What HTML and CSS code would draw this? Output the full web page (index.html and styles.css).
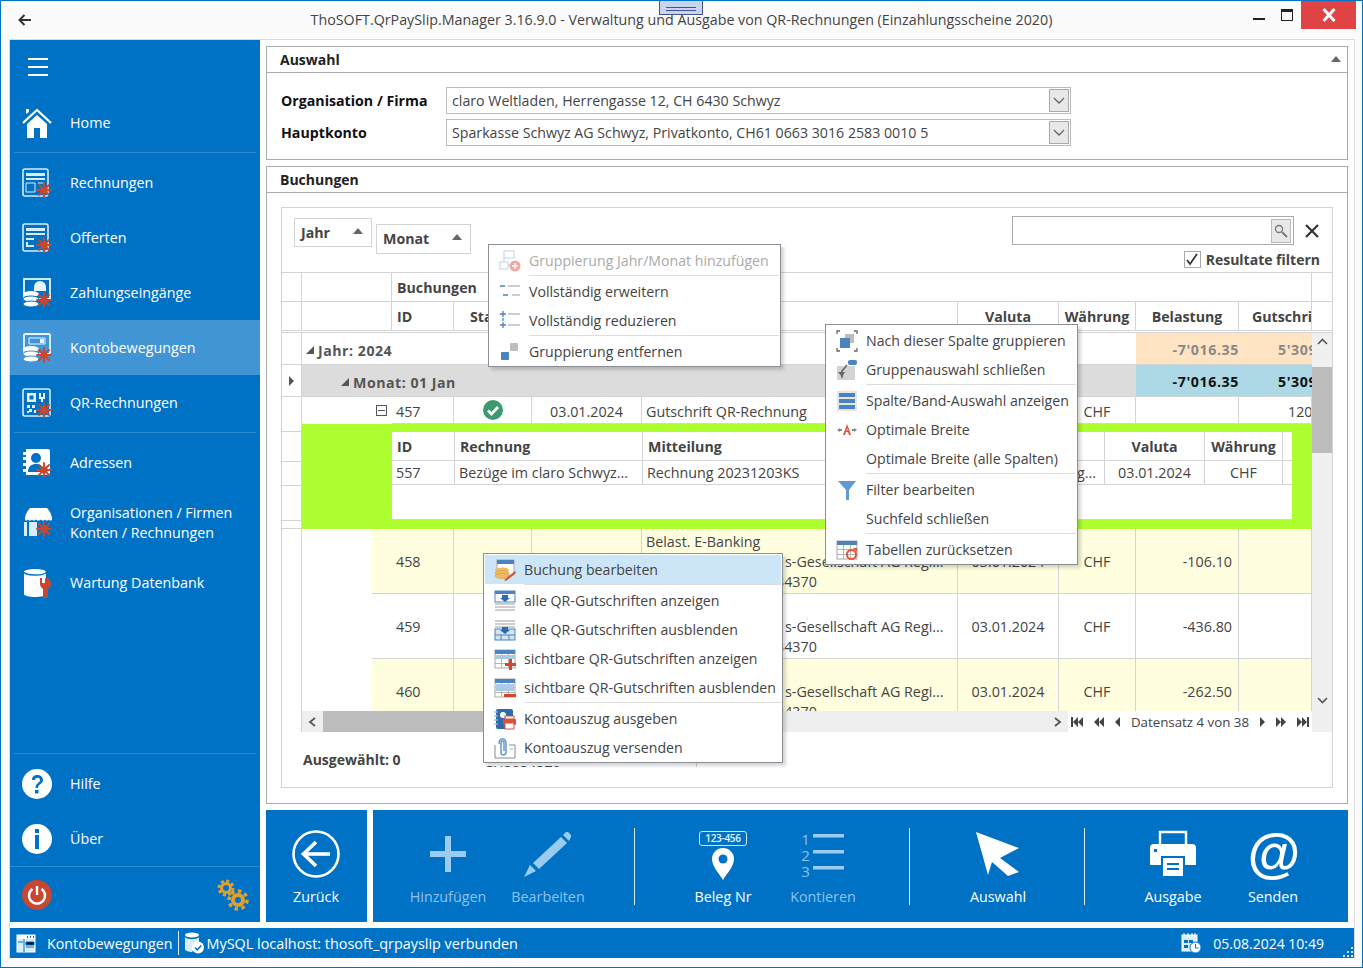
FILE: index.html
```html
<!DOCTYPE html>
<html lang="de">
<head>
<meta charset="utf-8">
<title>ThoSOFT.QrPaySlip.Manager</title>
<link rel="stylesheet" href="styles.css">
</head>
<body>
<svg class="defs" width="0" height="0">
  <symbol id="spark" viewBox="0 0 16 16">
    <g stroke="#c8472f" stroke-width="1.9" stroke-linecap="round"><path d="M8 1v14M1 8h14M3 3l10 10M13 3L3 13"/></g>
    <circle cx="8" cy="8" r="3.6" fill="#c8472f"/>
  </symbol>
  <symbol id="tblgrid" viewBox="0 0 22 22">
    <rect x="1" y="2" width="20" height="18" fill="#fff" stroke="#a9a9a9"/>
    <rect x="1" y="2" width="20" height="4" fill="#4a83bd"/>
    <path d="M1 10.500h20M1 15.500h20M7.500 6v14M14.500 6v14" stroke="#b5b5b5"/>
  </symbol>
</svg>
<div class="window">
  <header class="titlebar">
    <svg class="back" width="14" height="12" viewBox="0 0 14 12"><path d="M13 6H2M6.500 1L1.500 6l5 5" fill="none" stroke="#333" stroke-width="2"/></svg>
    <div class="title">ThoSOFT.QrPaySlip.Manager 3.16.9.0 - Verwaltung und Ausgabe von QR-Rechnungen (Einzahlungsscheine 2020)</div>
    <div class="winbtns">
      <span class="w-min"></span>
      <span class="w-max"></span>
      <span class="w-close"><svg width="16" height="14" viewBox="0 0 16 14"><path d="M2.500 1l11 12M13.500 1l-11 12" stroke="#fff" stroke-width="3"/></svg></span>
    </div>
  </header>
  <div class="frame">
    <div class="upper">
      <nav class="side">
        <div class="burger"><i></i><i></i><i></i></div>
        <a class="nav home"><svg class="ni" viewBox="0 0 30 30"><path d="M1 15L15 2l14 13" fill="none" stroke="#fff" stroke-width="2.200"/><path d="M4 6V1h3v3z" fill="#fff"/><path d="M5 16L15 7l10 9v14h-7V20h-6v10H5z" fill="#fff"/></svg><span>Home</span></a>
        <div class="navsep"></div>
        <a class="nav"><svg class="ni" viewBox="0 0 30 30"><rect x="1" y="1" width="25" height="27" rx="2" fill="none" stroke="#d8ecfa" stroke-width="1.600"/><path d="M4 5h19v3H4zM4 10h19v2H4z" fill="#d8ecfa"/><path d="M4 15h9v9H4z" fill="none" stroke="#d8ecfa"/><path d="M16 15h6" stroke="#d8ecfa"/><use href="#spark" x="14" y="14" width="16" height="16"/></svg><span>Rechnungen</span></a>
        <a class="nav"><svg class="ni" viewBox="0 0 30 30"><rect x="1" y="1" width="25" height="27" rx="2" fill="none" stroke="#d8ecfa" stroke-width="1.600"/><path d="M4 5h19v3H4zM4 10h19v2H4zM4 15h8v2H4zM4 19h2v4H4zM4 22h8v2H4z" fill="#d8ecfa"/><use href="#spark" x="14" y="14" width="16" height="16"/></svg><span>Offerten</span></a>
        <a class="nav"><svg class="ni" viewBox="0 0 30 30"><rect x="2" y="1" width="26" height="20" fill="none" stroke="#e8f4fc" stroke-width="1.800"/><path d="M12 9a6 6 0 0 1 12 0v4H12z" fill="#e8f4fc"/><ellipse cx="9" cy="16" rx="8" ry="3" fill="#fff"/><ellipse cx="9" cy="21" rx="8" ry="3" fill="#fff" stroke="#0072c6"/><ellipse cx="9" cy="26" rx="8" ry="3" fill="#fff" stroke="#0072c6"/><use href="#spark" x="14" y="14" width="16" height="16"/></svg><span>Zahlungseingänge</span></a>
        <a class="nav on"><svg class="ni" viewBox="0 0 30 30"><rect x="2" y="1" width="26" height="20" rx="1" fill="none" stroke="#e8f4fc" stroke-width="1.800"/><path d="M7 5h16v6H7z" fill="none" stroke="#e8f4fc"/><path d="M18 6h4v4h-4z" fill="#e8f4fc"/><ellipse cx="9" cy="16" rx="8" ry="3" fill="#fff"/><ellipse cx="9" cy="21" rx="8" ry="3" fill="#fff" stroke="#4195d4"/><ellipse cx="9" cy="26" rx="8" ry="3" fill="#fff" stroke="#4195d4"/><use href="#spark" x="14" y="14" width="16" height="16"/></svg><span>Kontobewegungen</span></a>
        <a class="nav"><svg class="ni" viewBox="0 0 30 30"><rect x="1" y="1" width="27" height="27" rx="2" fill="none" stroke="#d8ecfa" stroke-width="1.600"/><path d="M5 5h9v9H5zM7.500 7.500v4h4v-4z" fill="#e8f4fc" fill-rule="evenodd"/><path d="M17 5h2v4h2V5h2v6h-2v3h-2v-3h-2zM5 17h3v3H5zM10 17h3v3h-3zM7 21h3v3H7zM5 23h2v2H5zM12 22h2v3h-2z" fill="#e8f4fc"/><use href="#spark" x="14" y="14" width="16" height="16"/></svg><span>QR-Rechnungen</span></a>
        <div class="navsep s2nd"></div>
        <a class="nav"><svg class="ni" viewBox="0 0 30 30"><path d="M4 1h22a2 2 0 0 1 2 2v22a2 2 0 0 1-2 2H4v-3H1v-3h3v-3H1v-3h3v-3H1v-3h3V7H1V4h3z" fill="#fff"/><circle cx="14" cy="10" r="5" fill="#0072c6"/><path d="M6 24c0-6 4-8 8-8s8 2 8 8z" fill="#0072c6"/><use href="#spark" x="14" y="14" width="16" height="16"/></svg><span>Adressen</span></a>
        <a class="nav tall"><svg class="ni" viewBox="0 0 30 30"><path d="M5 0h20c3 3 5 7 5 11 0 2-3 2-3 0 0 2-4 2-4 0 0 2-4 2-4 0 0 2-5 2-5 0 0 2-4 2-4 0 0 2-4 2-4 0 0 2-3 2-3 0 0-4 2-8 5-11z" fill="#fff"/><path d="M2 14h3v14H2zM7 14h8v14H7z" fill="#d8ecfa"/><use href="#spark" x="14" y="13" width="16" height="16"/></svg><span>Organisationen / Firmen<br>Konten / Rechnungen</span></a>
        <a class="nav"><svg class="ni" viewBox="0 0 30 30"><path d="M2 4c0-4 22-4 22 0v22c0 4-22 4-22 0z" fill="#fff"/><path d="M2 4c0 4 22 4 22 0" fill="none" stroke="#0072c6" stroke-width="1.300"/><path d="M18 10h2v5h3v-5h2a6 6 0 0 1 4 6c0 3-2 4-3 5v8a2 2 0 0 1-5 0v-8c-1-1-3-2-3-5z" fill="#c8472f"/></svg><span>Wartung Datenbank</span></a>
        <div class="grow"></div>
        <div class="navsep"></div>
        <a class="nav"><svg class="ni" viewBox="0 0 30 30"><circle cx="15" cy="15" r="15" fill="#fff"/><path d="M10 11c0-7 11-6 11 0 0 4-5 4-5 8h-2.500c0-5 4.500-5 4.500-8 0-3-5-3-5 0z" fill="#0072c6"/><rect x="13" y="21" width="3.500" height="3.500" fill="#0072c6"/></svg><span>Hilfe</span></a>
        <a class="nav"><svg class="ni" viewBox="0 0 30 30"><circle cx="15" cy="15" r="15" fill="#fff"/><rect x="13" y="5" width="4" height="4" fill="#0072c6"/><rect x="13" y="11" width="4" height="14" fill="#0072c6"/></svg><span>Über</span></a>
        <div class="navsep wide"></div>
        <div class="sidefoot">
          <svg width="30" height="30" viewBox="0 0 30 30"><circle cx="15" cy="15" r="15" fill="#c8472f"/><path d="M10.500 9a8 8 0 1 0 9 0" fill="none" stroke="#fff" stroke-width="2.400"/><path d="M15 6v9" stroke="#fff" stroke-width="2.400"/></svg>
          <svg width="32" height="32" viewBox="0 0 32 32"><g fill="none" stroke="#e0a030"><circle cx="9" cy="9" r="4.500" stroke-width="3"/><circle cx="9" cy="9" r="7" stroke-width="3" stroke-dasharray="3 2.500"/><circle cx="21" cy="21" r="5" stroke-width="4"/><circle cx="21" cy="21" r="9" stroke-width="3.500" stroke-dasharray="3.500 3.500"/></g></svg>
        </div>
      </nav>
      <main class="content">
        <section class="panel p-top">
          <h2 class="phead">Auswahl<span class="uptri"></span></h2>
          <div class="form">
            <div class="frow"><label>Organisation / Firma</label><div class="combo"><span>claro Weltladen, Herrengasse 12, CH 6430 Schwyz</span><b class="drop"><svg width="12" height="7" viewBox="0 0 12 7"><path d="M1 1l5 5 5-5" fill="none" stroke="#666" stroke-width="1.300"/></svg></b></div></div>
            <div class="frow"><label>Hauptkonto</label><div class="combo"><span>Sparkasse Schwyz AG Schwyz, Privatkonto, CH61 0663 3016 2583 0010 5</span><b class="drop"><svg width="12" height="7" viewBox="0 0 12 7"><path d="M1 1l5 5 5-5" fill="none" stroke="#666" stroke-width="1.300"/></svg></b></div></div>
          </div>
        </section>
        <section class="panel p-book">
          <h2 class="phead">Buchungen</h2>
          <div class="pbody">
            <div class="box">
              <div class="gtool">
                <div class="gchip c-j">Jahr<span class="uptri"></span></div>
                <div class="gchip c-m">Monat<span class="uptri"></span></div>
                <div class="gsearch">
                  <div class="srow">
                    <div class="sinput"><b class="sbtn"><svg width="14" height="14" viewBox="0 0 14 14"><circle cx="5" cy="5" r="3.500" fill="none" stroke="#777" stroke-width="1.300"/><path d="M8 8l5 5" stroke="#777" stroke-width="1.800"/></svg></b></div>
                    <svg class="sclose" width="14" height="14" viewBox="0 0 14 14"><path d="M1 1l12 12M13 1L1 13" stroke="#333" stroke-width="2.200"/></svg>
                  </div>
                  <div class="sfilter"><span class="cb"><svg width="14" height="13" viewBox="0 0 14 13"><path d="M2 7l3 4 7-10" fill="none" stroke="#333" stroke-width="1.700"/></svg></span>Resultate filtern</div>
                </div>
              </div>
              <div class="r hr band">
                <div class="c stub"></div><div class="c s2"></div><div class="c s8 lft bold">Buchungen</div><div class="c sb"></div>
              </div>
              <div class="r hr cols">
                <div class="c stub"></div><div class="c s2"></div>
                <div class="c lft bold">ID</div><div class="c mid bold">Status</div><div class="c mid bold">Datum</div><div class="c lft bold">Text</div><div class="c mid bold">Valuta</div><div class="c mid bold">Währung</div><div class="c mid bold">Belastung</div><div class="c clipc bold">Gutschrift</div><div class="c sb"></div>
              </div>
              <div class="dbl"></div>
              <div class="gridbody">
                <div class="rows">
                  <div class="scrollrows">
                    <div class="r grp">
                      <div class="c stub"></div>
                      <div class="c s7 grouptxt bold"><i class="tri"></i>Jahr: 2024</div>
                      <div class="c orange rgt0 bold num">-7'016.35</div>
                      <div class="c orange clipn bold num">5'309.00</div>
                    </div>
                    <div class="r grp2">
                      <div class="c stub"><i class="rowptr"></i></div>
                      <div class="c s8 gray grouptxt2 bold"><i class="tri"></i>Monat: 01 Jan</div>
                      <div class="c lblue rgt0 bold num">-7'016.35</div>
                      <div class="c lblue clipn bold num">5'309.00</div>
                    </div>
                    <div class="r r457">
                      <div class="c stub"></div>
                      <div class="c nob ind"></div>
                      <div class="c nob ind"><i class="minus"></i></div>
                      <div class="c lft4 tx">457</div>
                      <div class="c mid"><svg width="22" height="22" viewBox="0 0 22 22"><circle cx="11" cy="11" r="10" fill="#3d9970"/><path d="M6 11.500l3.500 3.500L16 8" fill="none" stroke="#fff" stroke-width="2.800"/></svg></div>
                      <div class="c mid tx">03.01.2024</div>
                      <div class="c lft4 tx">Gutschrift QR-Rechnung</div>
                      <div class="c"></div>
                      <div class="c mid tx">CHF</div>
                      <div class="c"></div>
                      <div class="c clipa tx">120.00</div>
                    </div>
                    <div class="detail">
                      <div class="dstub"><i class="d1"></i><i class="d2"></i><i class="d3"></i><i class="d4"></i><i class="d5"></i></div>
                      <div class="dgreen">
                        <div class="inner">
                          <div class="ir ihead">
                            <div class="c lft bold">ID</div><div class="c lft bold">Rechnung</div><div class="c lft bold">Mitteilung</div><div class="c"></div><div class="c mid bold">Valuta</div><div class="c mid bold">Währung</div><div class="c nob"></div>
                          </div>
                          <div class="ir irow">
                            <div class="c lfti">557</div><div class="c lfti">Bezüge im claro Schwyz...</div><div class="c lfti">Rechnung 20231203KS</div><div class="c rgt2">E-Banking...</div><div class="c mid">03.01.2024</div><div class="c mid">CHF</div><div class="c nob"></div>
                          </div>
                          <div class="iblank"></div>
                        </div>
                      </div>
                    </div>
                    <div class="r dr yellow">
                      <div class="c stub none"></div><div class="c ind2"></div>
                      <div class="c idc">458</div><div class="c"></div><div class="c mid">03.01.2024</div>
                      <div class="c multi"><span>Belast. E-Banking</span><span class="l2">s-Gesellschaft AG Regi...</span><span class="l3">34370</span></div>
                      <div class="c mid">03.01.2024</div><div class="c mid">CHF</div><div class="c rgt">-106.10</div><div class="c"></div>
                    </div>
                    <div class="r dr">
                      <div class="c stub none"></div><div class="c ind2"></div>
                      <div class="c idc">459</div><div class="c"></div><div class="c mid">03.01.2024</div>
                      <div class="c multi"><span>Belast. E-Banking</span><span class="l2">s-Gesellschaft AG Regi...</span><span class="l3">34370</span></div>
                      <div class="c mid">03.01.2024</div><div class="c mid">CHF</div><div class="c rgt">-436.80</div><div class="c"></div>
                    </div>
                    <div class="r dr yellow">
                      <div class="c stub none"></div><div class="c ind2"></div>
                      <div class="c idc">460</div><div class="c"></div><div class="c mid">03.01.2024</div>
                      <div class="c multi"><span>Belast. E-Banking</span><span class="l2">s-Gesellschaft AG Regi...</span><span class="l3">34370</span></div>
                      <div class="c mid">03.01.2024</div><div class="c mid">CHF</div><div class="c rgt">-262.50</div><div class="c"></div>
                    </div>
                  </div>
                  <div class="hscroll">
                    <div class="hleft">
                      <b class="hbtn"><svg width="9" height="10" viewBox="0 0 9 10"><path d="M7 1L2 5l5 4" fill="none" stroke="#555" stroke-width="1.800"/></svg></b>
                      <i class="hthumb"></i>
                      <b class="hbtn end"><svg width="9" height="10" viewBox="0 0 9 10"><path d="M2 1l5 4-5 4" fill="none" stroke="#555" stroke-width="1.800"/></svg></b>
                    </div>
                    <div class="pager">
                      <svg width="12" height="10" viewBox="0 0 12 10"><path d="M0 0h2v10H0zM7 0v10L2 5zM12 0v10L7 5z" fill="#444"/></svg>
                      <svg width="10" height="10" viewBox="0 0 10 10"><path d="M5 0v10L0 5zM10 0v10L5 5z" fill="#444"/></svg>
                      <svg width="5" height="10" viewBox="0 0 5 10"><path d="M5 0v10L0 5z" fill="#444"/></svg>
                      <span>Datensatz 4 von 38</span>
                      <svg width="5" height="10" viewBox="0 0 5 10"><path d="M0 0v10l5-5z" fill="#444"/></svg>
                      <svg width="10" height="10" viewBox="0 0 10 10"><path d="M0 0v10l5-5zM5 0v10l5-5z" fill="#444"/></svg>
                      <svg width="12" height="10" viewBox="0 0 12 10"><path d="M0 0v10l5-5zM5 0v10l5-5zM10 0h2v10h-2z" fill="#444"/></svg>
                    </div>
                  </div>
                </div>
                <div class="vscroll">
                  <svg class="vchev" width="11" height="7" viewBox="0 0 11 7"><path d="M1 6l4.500-4.500L10 6" fill="none" stroke="#555" stroke-width="1.600"/></svg>
                  <i class="vthumb"></i>
                  <svg class="vchev bottom" width="11" height="7" viewBox="0 0 11 7"><path d="M1 1l4.500 4.500L10 1" fill="none" stroke="#555" stroke-width="1.600"/></svg>
                </div>
              </div>
              <div class="selected">Ausgewählt: 0</div>
            </div>
          </div>
        </section>
        <div class="tools">
          <div class="tgroup tback">
            <a class="tool"><svg class="ti" viewBox="0 0 48 48"><circle cx="24" cy="24" r="22.500" fill="none" stroke="#fff" stroke-width="2.600"/><path d="M38 24H13" stroke="#fff" stroke-width="3.600"/><path d="M24 12L11.500 24 24 36" fill="none" stroke="#fff" stroke-width="3.600"/></svg><span>Zurück</span></a>
          </div>
          <div class="tgroup tmain">
            <a class="tool off"><svg class="ti" viewBox="0 0 48 48"><path d="M21 6h6v15h15v6H27v15h-6V27H6v-6h15z" fill="#9ccbf0"/></svg><span>Hinzufügen</span></a>
            <a class="tool off"><svg class="ti" viewBox="0 0 48 48"><path d="M0 47l6-12 6 6z" fill="#9ccbf0"/><path d="M9 33L37 7l6 6-28 26z" fill="#9ccbf0"/><path d="M39 5l3-3h2l3 3v2l-2 4z" fill="#9ccbf0"/></svg><span>Bearbeiten</span></a>
            <i class="tsep"></i>
            <a class="tool"><span class="belegico"><em>123-456</em><svg width="26" height="34" viewBox="0 0 26 34"><path d="M13 33C8 25 2 19 2 12a11 11 0 0 1 22 0c0 7-6 13-11 21z" fill="#fff"/><circle cx="13" cy="12" r="4.500" fill="#0072c6"/></svg></span><span>Beleg Nr</span></a>
            <a class="tool off"><span class="konti"><em>1<br>2<br>3</em><svg width="32" height="40" viewBox="0 0 32 40"><path d="M0 4h31v3.500H0zM0 20h31v3.500H0zM0 36h31v3.500H0z" fill="#9ccbf0"/></svg></span><span>Kontieren</span></a>
            <i class="tsep"></i>
            <a class="tool"><svg class="ti" viewBox="0 0 48 48"><path d="M2 2l43 16-19 10 19 14-11 4-16-14-4 13z" fill="#fff"/></svg><span>Auswahl</span></a>
            <i class="tsep"></i>
            <a class="tool"><svg class="ti" viewBox="0 0 48 48"><path d="M11 15V2h26v13" fill="none" stroke="#fff" stroke-width="2.400"/><path d="M5 14h38a4 4 0 0 1 4 4v17H36V26H12v9H1V18a4 4 0 0 1 4-4z" fill="#fff"/><path d="M5 19h3v3H5z" fill="#0072c6"/><path d="M14 28h20v18H14z" fill="#fff"/><path d="M18 33h12v2H18zM18 38h12v2H18z" fill="#0072c6"/></svg><span>Ausgabe</span></a>
            <a class="tool"><span class="atico">@</span><span>Senden</span></a>
          </div>
        </div>
      </main>
    </div>
    <footer class="status">
      <svg class="st1" width="20" height="19" viewBox="0 0 20 19"><rect x="1" y="1" width="18" height="17" fill="#d8ecfa" stroke="#fff"/><rect x="1" y="1" width="18" height="4" fill="#fff"/><path d="M11 2h1v2h-1zM14 2h1v2h-1zM17 2h1v2h-1z" fill="#0072c6"/><path d="M8 5v13M2 8h5M10 8h8v3h-8zM10 13h8" stroke="#0072c6"/></svg>
      <span class="st-t1">Kontobewegungen</span>
      <i class="st-sep"></i>
      <svg class="st2" width="20" height="22" viewBox="0 0 20 22"><ellipse cx="8" cy="3" rx="7" ry="2.500" fill="#fff"/><path d="M1 5c2 3 12 3 14 0v6l-7 9c-3 0-7-1-7-3z" fill="#d8ecfa"/><circle cx="14" cy="15.500" r="6" fill="#fff"/><path d="M11 15.500l2.300 2.300 4-4.300" fill="none" stroke="#0072c6" stroke-width="1.500"/></svg>
      <span class="st-t2">MySQL localhost: thosoft_qrpayslip verbunden</span>
      <span class="st-right">
        <svg width="21" height="22" viewBox="0 0 21 22"><rect x="1" y="3" width="15" height="16" fill="#d8ecfa" stroke="#fff"/><path d="M3 1v4M7 1v4M11 1v4M14 1v4" stroke="#fff"/><path d="M3 8h4v3H3zM8 8h4v3H8zM3 13h4v3H3z" fill="#0072c6"/><circle cx="14.500" cy="15.500" r="5.500" fill="#fff" stroke="#0072c6"/><path d="M14.500 12v4h3" fill="none" stroke="#0072c6"/></svg>
        <span class="st-time">05.08.2024 10:49</span>
      </span>
      <svg class="grip" width="10" height="10" viewBox="0 0 10 10"><path d="M8 0h2v2H8zM4 4h2v2H4zM8 4h2v2H8zM0 8h2v2H0zM4 8h2v2H4zM8 8h2v2H8z" fill="#cfe6f8"/></svg>
    </footer>
  </div>

  <div class="handle"><i></i></div>
  <div class="ghost"><span>CH2034370</span></div>

  <div class="menu m1">
    <div class="mi dis"><svg viewBox="0 0 22 22"><rect x="5" y="1" width="10" height="7" fill="#fff" stroke="#c3d2e5"/><rect x="1" y="12" width="8" height="7" fill="#fff" stroke="#c3d2e5"/><path d="M5 8v4M9 15h4" stroke="#c3d2e5"/><circle cx="16" cy="16" r="5.500" fill="#f0a9a0"/><path d="M16 13v6M13 16h6" stroke="#fff" stroke-width="1.500"/></svg><span>Gruppierung Jahr/Monat hinzufügen</span></div>
    <div class="ms"></div>
    <div class="mi"><svg viewBox="0 0 22 22"><path d="M1 5h5M4 14h5" stroke="#4a83bd" stroke-width="1.300"/><path d="M9 5h12M13 14h8" stroke="#bdbdbd" stroke-width="1.300"/></svg><span>Vollständig erweitern</span></div>
    <div class="mi"><svg viewBox="0 0 22 22"><path d="M1 4h6M4 1v6M1 15h6M4 12v6M4 8v3" stroke="#4a83bd" stroke-width="1.300"/><path d="M9 4h12M9 15h12" stroke="#bdbdbd" stroke-width="1.300"/></svg><span>Vollständig reduzieren</span></div>
    <div class="ms"></div>
    <div class="mi"><svg viewBox="0 0 22 22"><rect x="11" y="2" width="8" height="8" rx="1" fill="#bdbdbd"/><rect x="2" y="11" width="8" height="8" rx="1" fill="#4a83bd"/></svg><span>Gruppierung entfernen</span></div>
  </div>

  <div class="menu m2">
    <div class="mi"><svg viewBox="0 0 22 22"><path d="M1 4V1h3M18 1h3v3M1 18v3h3M18 21h3v-3" fill="none" stroke="#666" stroke-width="1.300"/><rect x="9" y="4" width="9" height="9" fill="#bdbdbd"/><rect x="4" y="8" width="10" height="10" fill="#4a83bd"/></svg><span>Nach dieser Spalte gruppieren</span></div>
    <div class="mi"><svg viewBox="0 0 22 22"><rect x="1" y="7" width="18" height="14" fill="#d4d4d4"/><rect x="12" y="1" width="9" height="5" rx="2" fill="#4a83bd"/><path d="M11 6L6 12v7" fill="none" stroke="#666" stroke-width="1.600"/><path d="M2 13h7l-3 5z" fill="#666"/></svg><span>Gruppenauswahl schließen</span></div>
    <div class="ms"></div>
    <div class="mi"><svg viewBox="0 0 22 22"><rect x="1" y="1" width="20" height="20" fill="#e4e4e4"/><path d="M3 3h16v4H3zM3 9h16v4H3zM3 15h16v4H3z" fill="#4a83bd"/></svg><span>Spalte/Band-Auswahl anzeigen</span></div>
    <div class="mi"><svg viewBox="0 0 22 22"><path d="M1 11l3-2v4zM21 11l-3-2v4z" fill="#888"/><path d="M4 10h2v2H4zM16 10h2v2h-2z" fill="#888"/><path d="M7 16l4-11 4 11h-2l-1-3h-2l-1 3zM10.300 11.500h1.400L11 9z" fill="#e0533d" fill-rule="evenodd"/></svg><span>Optimale Breite</span></div>
    <div class="mi"><i class="noico"></i><span>Optimale Breite (alle Spalten)</span></div>
    <div class="ms"></div>
    <div class="mi"><svg viewBox="0 0 22 22"><path d="M2 2h18l-7 9v10h-3V11z" fill="#5f9bd1"/></svg><span>Filter bearbeiten</span></div>
    <div class="mi"><i class="noico"></i><span>Suchfeld schließen</span></div>
    <div class="ms"></div>
    <div class="mi"><svg viewBox="0 0 22 22"><use href="#tblgrid" width="22" height="22"/><circle cx="15.500" cy="15.500" r="4.500" fill="none" stroke="#e0533d" stroke-width="2"/><path d="M17 9h4v4z" fill="#e0533d"/></svg><span>Tabellen zurücksetzen</span></div>
  </div>

  <div class="menu m3">
    <div class="mi hot"><svg viewBox="0 0 22 22"><rect x="3" y="1" width="17" height="15" fill="#fff" stroke="#a9a9a9"/><rect x="3" y="1" width="17" height="4" fill="#4a83bd"/><ellipse cx="8" cy="11" rx="7" ry="2.500" fill="#f0b860"/><ellipse cx="8" cy="14" rx="7" ry="2.500" fill="#f0b860" stroke="#d89a40" stroke-width=".6"/><ellipse cx="8" cy="17" rx="7" ry="2.500" fill="#f0b860" stroke="#d89a40" stroke-width=".6"/><path d="M10 21l11-9 1 2-10 8z" fill="#d9533d"/></svg><span>Buchung bearbeiten</span></div>
    <div class="ms"></div>
    <div class="mi"><svg viewBox="0 0 22 22"><rect x="1" y="1" width="20" height="11" fill="#fff" stroke="#4a83bd"/><rect x="1" y="1" width="20" height="3" fill="#4a83bd"/><path d="M8 5h6v3h2l-5 4-5-4h2z" fill="#2d6ca8"/><path d="M1 14h20M1 17h20M1 20h20" stroke="#9c9c9c"/></svg><span>alle QR-Gutschriften anzeigen</span></div>
    <div class="mi"><svg viewBox="0 0 22 22"><path d="M1 2h20M1 5h20M1 8h20" stroke="#9c9c9c"/><rect x="1" y="10" width="20" height="11" fill="#d2e3f2" stroke="#4a83bd"/><path d="M1 16h20M7 16v5M15 16v5" stroke="#4a83bd"/><path d="M8 8h6v3h2l-5 4-5-4h2z" fill="#2d6ca8"/></svg><span>alle QR-Gutschriften ausblenden</span></div>
    <div class="mi"><svg viewBox="0 0 22 22"><use href="#tblgrid" width="22" height="22"/><rect x="1" y="7" width="20" height="3.500" fill="#a9cbe8"/><path d="M15 11h3v4h4v3h-4v4h-3v-4h-4v-3h4z" fill="#d9432f"/></svg><span>sichtbare QR-Gutschriften anzeigen</span></div>
    <div class="mi"><svg viewBox="0 0 22 22"><use href="#tblgrid" width="22" height="22"/><rect x="2" y="7" width="18" height="7" fill="#a9cbe8"/><rect x="10" y="17" width="12" height="3" fill="#d9432f"/></svg><span>sichtbare QR-Gutschriften ausblenden</span></div>
    <div class="ms"></div>
    <div class="mi"><svg viewBox="0 0 22 22"><rect x="2" y="1" width="17" height="20" rx="2" fill="#2d6ca8"/><path d="M0 4h4M0 8h4M0 12h4M0 16h4" stroke="#fff" stroke-width="1.200"/><path d="M0 4h4M0 8h4M0 12h4M0 16h4" stroke="#2d6ca8" stroke-width=".6"/><circle cx="9" cy="7" r="3" fill="#fff"/><rect x="9" y="11" width="13" height="6" rx="1" fill="#d9533d"/><rect x="11" y="8" width="9" height="3" fill="#fff" stroke="#d9533d"/><rect x="11" y="15" width="9" height="6" fill="#fff" stroke="#d9533d"/></svg><span>Kontoauszug ausgeben</span></div>
    <div class="mi"><svg viewBox="0 0 22 22"><path d="M1 8v13h20V8h-6" fill="#fff" stroke="#8a8a8a"/><path d="M16 12h3" stroke="#aaa"/><path d="M5 7c0-7 7-7 7 0v8c0 4-5 4-5 0V6c0-3 3-3 3 0v8" fill="none" stroke="#5f9bd1" stroke-width="1.500"/></svg><span>Kontoauszug versenden</span></div>
  </div>
</div>
</body>
</html>
```
FILE: styles.css
```css
* { box-sizing: border-box; }
html, body { margin: 0; padding: 0; }
body { font-family: "Open Sans", "Noto Sans", sans-serif; font-size: 14.3px; color: #444; }
.defs { display: block; height: 0; position: absolute; }
i, em { font-style: normal; }
svg { display: block; flex: none; }
b { font-weight: 700; }

.window { position: relative; width: 1363px; height: 968px; background: #fbfbfb; border: 1px solid #0072c6; overflow: hidden; display: flex; flex-direction: column; }

/* title bar */
.titlebar { height: 38px; flex: none; position: relative; display: flex; align-items: center; justify-content: center; }
.back { position: absolute; left: 17px; top: 13px; }
.title { color: #444; margin-top: -2px; font-size: 14.27px; }
.winbtns { position: absolute; right: 6px; top: 0; display: flex; }
.w-min { width: 12px; height: 2px; background: #222; margin: 17px 16px 0 0; }
.w-max { width: 12px; height: 12px; border: 1px solid #222; border-top-width: 3px; margin: 8px 8px 0 0; }
.w-close { width: 55px; height: 28px; background: #e04343; display: flex; align-items: center; justify-content: center; }

/* frame */
.frame { margin: 0 7px 0 8px; height: 920px; background: #fff; border: 1px solid #dcdcdc; border-bottom: 0; display: flex; flex-direction: column; gap: 6px; }
.upper { height: 882px; flex: none; display: flex; gap: 6px; padding-right: 6px; }

/* sidebar */
.side { width: 250px; flex: none; background: #0072c6; color: #fff; display: flex; flex-direction: column; }
.burger { height: 54px; padding: 18px 0 0 18px; display: flex; flex-direction: column; gap: 6px; flex: none; }
.burger i { display: block; width: 20px; height: 2px; background: #fff; }
.nav { height: 55px; flex: none; display: flex; align-items: center; padding-left: 12px; line-height: 20px; }
.nav > span { margin-left: 18px; color: #fff; }
.nav.home { height: 58px; }
.nav.on { background: #4195d4; }
.nav.tall { height: 65px; }
.ni { width: 30px; height: 30px; }
.navsep { height: 1px; margin: 0 4px 2px; background: #2e8bd0; flex: none; }
.navsep.s2nd { margin-top: 2px; }
.navsep.wide { margin: 0; }
.grow { flex: 1; }
.sidefoot { flex: none; height: 55px; display: flex; align-items: center; justify-content: space-between; padding: 0 11px 0 12px; }

/* content */
.content { width: 1082px; flex: none; display: flex; flex-direction: column; gap: 6px; padding-top: 6px; }
.panel { border: 1px solid #aaa; background: #fff; flex: none; }
.p-top { height: 114px; }
.p-book { height: 638px; }
.phead { margin: 0; height: 26px; padding: 0 0 0 13px; font-size: 14px; font-weight: 700; color: #222; line-height: 25px; border-bottom: 1px solid #aaa; position: relative; }
.uptri { display: block; width: 0; height: 0; border-left: 5.5px solid transparent; border-right: 5.5px solid transparent; border-bottom: 6px solid #666; position: absolute; }
.phead .uptri { right: 6px; top: 9px; }
.form { padding: 14px 0 0 14px; display: flex; flex-direction: column; gap: 5px; }
.frow { display: flex; align-items: center; height: 27px; }
.frow label { width: 165px; font-size: 14.2px; font-weight: 700; color: #111; }
.combo { width: 625px; height: 27px; font-size: 14.2px; border: 1px solid #bbb; padding-left: 5px; display: flex; align-items: center; justify-content: space-between; }
.drop { width: 20px; height: 23px; margin-right: 1px; background: #e8e8e8; border: 1px solid #aaa; display: flex; align-items: center; justify-content: center; }

.pbody { padding: 14px 14px 15px; }
.box { height: 581px; border: 1px solid #d4d4d4; }

/* group toolbar */
.gtool { height: 64px; display: flex; align-items: flex-start; padding: 10px 12px 0 12px; }
.gchip { position: relative; border: 1px solid #d4d4d4; font-size: 14.2px; font-weight: 700; color: #444; padding-left: 6px; }
.gchip .uptri { right: 8px; top: 9px; }
.c-j { width: 78px; height: 29px; line-height: 27px; }
.c-m { width: 95px; height: 30px; line-height: 28px; margin: 6px 0 0 4px; }
.gsearch { margin-left: auto; width: 308px; display: flex; flex-direction: column; }
.srow { display: flex; align-items: center; justify-content: space-between; padding-right: 1px; margin-top: -2px; }
.sinput { width: 282px; height: 29px; border: 1px solid #aaa; display: flex; justify-content: flex-end; align-items: center; padding-right: 2px; }
.sbtn { width: 20px; height: 24px; background: #e8e8e8; border: 1px solid #bbb; display: flex; align-items: center; justify-content: center; }
.sfilter { display: flex; align-items: center; justify-content: flex-end; font-size: 14px; font-weight: 700; margin-top: 5px; }
.cb { width: 17px; height: 17px; border: 1px solid #aaa; margin-right: 5px; display: flex; align-items: center; justify-content: center; }

/* grid */
.r { display: grid; grid-template-columns: 20px 70px 20px 62px 78px 110px 316px 101px 77px 103px 73px; }
.c { border-right: 1px solid #d4d4d4; border-bottom: 1px solid #d4d4d4; min-width: 0; overflow: hidden; white-space: nowrap; display: flex; align-items: center; }
.hr { grid-template-columns: 20px 70px 20px 62px 78px 110px 316px 101px 77px 103px 73px 20px; color: #444; }
.hr .s2 { grid-column: span 2; }
.hr .s8 { grid-column: span 8; }
.band { height: 30px; border-top: 1px solid #d4d4d4; }
.cols { height: 29px; }
.dbl { height: 2px; border-bottom: 1px solid #d4d4d4; }
.bold { font-size: 14.2px; font-weight: 700; }
.lft { padding-left: 5px; }
.lft4 { padding-left: 4px; }
.mid { justify-content: center; }
.rgt { justify-content: flex-end; padding-right: 6px; }
.rgt0 { justify-content: flex-end; padding-right: 0; }
.num { letter-spacing: 0.6px; }
.clipc { padding-left: 13px; }
.clipn { padding-left: 39px; }
.clipa { padding-left: 49px; }
.sb { border-right: 0; }
.gridbody { display: flex; }
.rows { width: 1030px; flex: none; }
.scrollrows { height: 378px; overflow: hidden; }
.grp { height: 32px; }
.grp .s7 { grid-column: 2 / 10; border-right: 0; }
.grouptxt { padding: 3px 0 0 4px; color: #555; letter-spacing: 0.5px; }
.tri { display: block; width: 0; height: 0; border-bottom: 8px solid #555; border-left: 8px solid transparent; margin-right: 4px; flex: none; }
.orange { background: #ffe4c4; color: #8a8a8a; border-right: 0; padding-top: 1px; }
.lblue { background: #add8e6; color: #111; border-right: 0; padding-top: 1px; }
.grp2 { height: 32px; }
.gray { background: #dcdcdc; color: #555; }
.grp2 .s8 { grid-column: 2 / 10; padding: 3px 0 0 39px; border-right: 0; letter-spacing: 0.5px; }
.rowptr { display: block; width: 0; height: 0; border-left: 5px solid #555; border-top: 5px solid transparent; border-bottom: 5px solid transparent; margin-left: 7px; }
.r457 { height: 27px; }
.r457 .ind { border-bottom: 0; }
.r457 .tx { padding-top: 2px; }
.minus { display: block; width: 11px; height: 11px; border: 1px solid #555; margin-left: 4px; position: relative; }
.minus::after { content: ""; display: block; width: 7px; height: 1px; background: #555; margin: 4px 1px; }
.stub { border-bottom: 1px solid #d4d4d4; }
.r457 .stub { border-bottom: 0; }

.detail { height: 105px; display: flex; }
.dstub { width: 20px; flex: none; border-right: 1px solid #d4d4d4; display: flex; flex-direction: column; }
.dstub i { display: block; border-bottom: 1px solid #d4d4d4; }
.d1 { height: 8px; } .d2 { height: 30px; } .d3 { height: 24px; } .d4 { height: 35px; } .d5 { height: 8px; }
.dgreen { width: 1010px; background: #adff2f; padding: 8px 20px 9px 90px; }
.inner { background: #fff; height: 88px; }
.ir { display: grid; grid-template-columns: 63px 188px 188px 274px 100px 78px 9px; }
.ihead { height: 29px; }
.irow { height: 24px; }
.nob { border-right: 0; }
.lfti { padding-left: 4px; }
.rgt2 { justify-content: flex-end; padding-right: 8px; }
.iblank { height: 35px; border-bottom: 1px solid #d4d4d4; }

.dr { height: 65px; }
.c.none { border: 0; }
.dr .stub { border-right: 1px solid #d4d4d4; }
.dr .ind2 { border: 0; }
.dr.yellow .c:not(.ind2):not(.stub) { background: #ffffe0; }
.idc { grid-column: span 2; padding-left: 24px; }
.multi { flex-direction: column; align-items: flex-start; justify-content: center; padding: 1px 0 0 4px; line-height: 20px; }
.multi .l2 { margin-left: 139px; }
.multi .l3 { margin-left: 130px; }

.hscroll { height: 21px; display: flex; }
.hleft { width: 767px; margin-left: 19px; background: #efefef; display: flex; align-items: center; position: relative; border-left: 1px solid #d4d4d4; }
.hbtn { width: 21px; height: 21px; display: flex; align-items: center; justify-content: center; flex: none; }
.hbtn.end { margin-left: auto; }
.hthumb { display: block; width: 300px; height: 21px; background: #bcbcbc; }
.pager { flex: 1; background: #fff; display: flex; align-items: center; justify-content: space-between; padding: 0 3px 0 3px; font-size: 13.3px; }
.vscroll { width: 20px; flex: none; background: #f0f0f0; display: flex; flex-direction: column; align-items: center; }
.vchev { margin-top: 5px; }
.vthumb { display: block; width: 20px; height: 86px; margin-top: 22px; background: #bcbcbc; }
.vchev.bottom { margin-top: auto; margin-bottom: 28px; }
.selected { padding-left: 21px; font-size: 14px; font-weight: 700; line-height: 56px; }

/* bottom toolbar */
.tools { display: flex; gap: 6px; height: 112px; flex: none; }
.tgroup { background: #0072c6; color: #fff; display: flex; align-items: center; }
.tback { width: 101px; }
.tmain { width: 975px; padding-left: 25px; }
.tool { width: 100px; height: 112px; flex: none; display: flex; flex-direction: column; align-items: center; padding-top: 20px; position: relative; }
.tool > span:last-child { position: absolute; top: 77px; }
.tool.off > span:last-child { color: #8fc1ea; }
.ti { width: 48px; height: 48px; }
.tsep { display: block; width: 1px; height: 77px; background: #d8ecfa; margin: 0 38px 0 36px; flex: none; }
.belegico { width: 48px; display: flex; flex-direction: column; align-items: center; margin-top: 1px; }
.belegico em { display: block; width: 48px; height: 15px; border: 1.500px solid #cfe6f8; border-radius: 3px; font-size: 10px; line-height: 12px; text-align: center; color: #e6f2fb; font-weight: 600; letter-spacing: -0.3px; }
.belegico svg { margin-top: 1px; }
.konti { display: flex; gap: 3px; margin-top: 0; align-items: flex-start; color: #8fc1ea; }
.konti em { font-size: 15px; line-height: 16px; margin-top: 1px; }
.atico { font-family: "Liberation Sans", sans-serif; font-style: italic; font-weight: 700; font-size: 54px; line-height: 48px; height: 48px; color: #fff; margin-top: -1px; }

/* status bar */
.status { height: 30px; flex: none; background: #0072c6; color: #fff; display: flex; align-items: center; position: relative; }
.st1 { margin-left: 6px; }
.st-t1 { margin-left: 11px; }
.st-t2 { font-size: 14.4px; }
.st-sep { display: block; width: 1px; height: 24px; background: #d8ecfa; margin: 0 5px 0 5px; }
.st2 { margin-right: 3px; }
.st-right { margin-left: auto; display: flex; align-items: center; gap: 11px; margin-right: 30px; }
.st-time { font-size: 14px; }
.grip { position: absolute; right: 1px; bottom: 1px; }

/* overlays */
.handle { position: absolute; left: 658px; top: -1px; width: 44px; height: 15px; background: #c9d5ee; border: 1px solid #44548a; }
.handle i { display: block; margin: 6px 6px 0; height: 4px; border-top: 1px solid #44548a; border-bottom: 1px solid #44548a; }
.ghost { position: absolute; left: 483px; top: 761px; width: 213px; height: 5px; overflow: hidden; border-right: 1px solid #d4d4d4; line-height: 18px; color: #444; }
.menu { position: absolute; background: #fff; border: 1px solid #8a8f96; padding: 1px 1px 0; box-shadow: 3px 3px 3px rgba(0, 0, 0, .16); font-size: 14.15px; }
.mi { height: 29px; display: flex; align-items: center; color: #444; white-space: nowrap; }
.mi > svg, .mi > .noico { width: 22px; height: 22px; margin: 0 8px 0 9px; flex: none; }
.mi > span { min-width: 0; }
.dis { color: #aaa; }
.hot { background: #cde6f7; }
.ms { height: 2px; margin-left: 39px; border-top: 1px solid #ddd; }
.m1 { left: 487px; top: 243px; width: 293px; height: 123px; }
.m2 { left: 824px; top: 323px; width: 253px; height: 241px; }
.m3 { left: 482px; top: 552px; width: 300px; height: 210px; }
```
